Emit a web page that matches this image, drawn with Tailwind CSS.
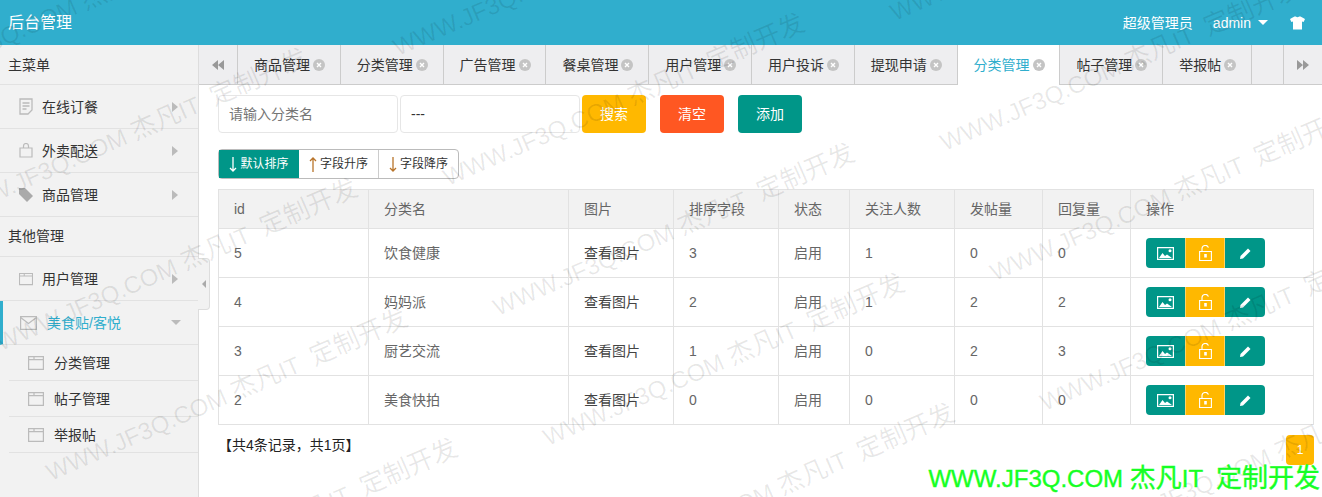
<!DOCTYPE html>
<html lang="zh">
<head>
<meta charset="utf-8">
<title>后台管理</title>
<script src="https://cdn.jsdelivr.net/npm/@tailwindcss/browser@4"></script>
</head>
<body class="font-['Liberation_Sans','Noto_Sans_CJK_SC',sans-serif] text-sm text-[#333] bg-white">
<div class="relative h-[497px] overflow-hidden flex flex-col">

    <!-- 顶栏 -->
    <header class="h-[45px] shrink-0 bg-[#30aecd] text-white flex items-center pl-2 pr-[17px]">
        <span class="text-base">后台管理</span>
        <span class="ml-auto">超级管理员</span>
        <span class="ml-5">admin</span>
        <span class="ml-[7px] border-x-[5px] border-t-[5px] border-x-transparent border-t-white"></span>
        <svg class="ml-[22px] w-[15px] h-[14px]" viewBox="0 0 15 14" fill="#fff"><path d="M4.5 0.5 L5.8 0.5 Q7.5 2 9.2 0.5 L10.5 0.5 L15 3 L13.6 6 L12 5.4 L12 13.5 L3 13.5 L3 5.4 L1.4 6 L0 3 Z"/></svg>
    </header>

    <div class="flex flex-1 min-h-0">
        <!-- 侧栏 -->
        <aside class="relative w-[199px] shrink-0 bg-[#f2f2f2] border-r border-[#ddd] text-[#333]">
            <div class="h-10 pl-2 flex items-center border-b border-[#e2e2e2]">主菜单</div>
            <div id="menu_main"></div>
            <div class="h-10 pl-2 pb-0.5 flex items-center border-b border-[#e2e2e2]">其他管理</div>
            <div id="menu_other"></div>
            <div class="absolute left-[198px] top-[213px] w-3 h-[52px] bg-[#f2f2f2] border border-l-0 border-[#ddd] rounded-r flex items-center justify-center">
                <span class="border-y-[4px] border-r-[4px] border-y-transparent border-r-[#aaa]"></span>
            </div>
        </aside>

        <main class="flex-1 min-w-0 flex flex-col">
            <!-- 标签栏 -->
            <nav id="tabs" class="h-10 shrink-0 flex bg-[#eeeef0] border-b border-[#ccc]"></nav>

            <div class="pl-[19px] pr-2 pt-2.5">
                <div class="flex items-start h-[38px]">
                    <input class="w-[180px] h-[38px] border border-[#e6e6e6] rounded-sm px-2.5 bg-white placeholder:text-[#757575] outline-none" placeholder="请输入分类名">
                    <div class="ml-0.5 w-[180px] h-[38px] border border-[#e6e6e6] rounded-sm px-2.5 flex items-center">---</div>
                    <button class="ml-0.5 w-16 h-[38px] rounded-sm bg-[#ffb800] text-white">搜索</button>
                    <button class="ml-3.5 w-16 h-[38px] rounded-sm bg-[#ff5722] text-white">清空</button>
                    <button class="ml-3.5 w-16 h-[38px] rounded-sm bg-[#009688] text-white">添加</button>
                </div>

                <div class="mt-4 w-[241px] h-[30px] flex border border-[#bbb] rounded-sm text-xs">
                    <div class="w-[80px] bg-[#009688] text-white flex items-center justify-center gap-[3px]"><svg class="w-2 h-[15px]" viewBox="0 0 8 15" fill="none" stroke="#fff" stroke-width="1.3"><path d="M4 0V14M1 11l3 3 3-3"/></svg>默认排序</div>
                    <div class="w-[80px] border-r border-[#ccc] flex items-center justify-center gap-[3px]"><svg class="w-2 h-[15px]" viewBox="0 0 8 15" fill="none" stroke="#b8742a" stroke-width="1.3"><path d="M4 1V15M1 4l3-3 3 3"/></svg>字段升序</div>
                    <div class="flex-1 flex items-center justify-center gap-[3px]"><svg class="w-2 h-[15px]" viewBox="0 0 8 15" fill="none" stroke="#b8742a" stroke-width="1.3"><path d="M4 0V14M1 11l3 3 3-3"/></svg>字段降序</div>
                </div>

                <table class="mt-2.5 w-[1095px] table-fixed text-[#666]">
                    <colgroup>
                        <col class="w-[150px]"><col class="w-[200px]"><col class="w-[105px]"><col class="w-[105px]"><col class="w-[71px]"><col class="w-[105px]"><col class="w-[88px]"><col class="w-[88px]"><col class="w-[183px]">
                    </colgroup>
                    <thead>
                        <tr class="h-[39px] bg-[#f2f2f2]">
                            <th class="font-normal text-left px-[15px] border border-[#e2e2e2]">id</th>
                            <th class="font-normal text-left px-[15px] border border-[#e2e2e2]">分类名</th>
                            <th class="font-normal text-left px-[15px] border border-[#e2e2e2]">图片</th>
                            <th class="font-normal text-left px-[15px] border border-[#e2e2e2]">排序字段</th>
                            <th class="font-normal text-left px-[15px] border border-[#e2e2e2]">状态</th>
                            <th class="font-normal text-left px-[15px] border border-[#e2e2e2]">关注人数</th>
                            <th class="font-normal text-left px-[15px] border border-[#e2e2e2]">发帖量</th>
                            <th class="font-normal text-left px-[15px] border border-[#e2e2e2]">回复量</th>
                            <th class="font-normal text-left px-[15px] border border-[#e2e2e2]">操作</th>
                        </tr>
                    </thead>
                    <tbody id="rows"></tbody>
                </table>

                <div class="relative mt-2.5 leading-[20px] text-[#222]">【共4条记录，共1页】
                    <span class="absolute left-[1068px] top-0 w-7 h-[30px] bg-[#ffb800] rounded-sm text-white text-xs flex items-center justify-center">1</span>
                </div>
            </div>
        </main>
    </div>

    <!-- 水印 -->
    <div id="watermark" class="absolute inset-0 overflow-hidden pointer-events-none"></div>
    <div class="absolute right-[2px] top-[464px] whitespace-pre text-2xl leading-[28px] text-[#16ff24] [-webkit-text-stroke:0.4px_#16ff24]">WWW.JF3Q.COM <span class="text-[26px]">杰凡</span>IT  <span class="text-[26px]">定制开发</span></div>
</div>

<script>
const icons = {
    doc: '<svg class="w-[14px] h-[17px]" viewBox="0 0 14 17" fill="none" stroke="#bbb" stroke-width="1.3"><path d="M1 1h12v11l-4 4H1zM3.5 5h7M3.5 8h7M3.5 11h4"/></svg>',
    bag: '<svg class="w-[14px] h-[15px]" viewBox="0 0 14 15" fill="none" stroke="#bbb" stroke-width="1.2"><path d="M1 5h12v9H1zM4.5 5V3a2.5 2.5 0 0 1 5 0v2"/></svg>',
    tag: '<svg class="w-[14px] h-[14px]" viewBox="0 0 14 14" fill="#aaa"><path d="M0 0h6l8 8-6 6-8-8z"/></svg>',
    folder: '<svg class="w-4 h-3.5" viewBox="0 0 16 14" fill="none" stroke="#bbb" stroke-width="1.2"><path d="M.6.6h14.8v12.8H.6zM.6 3.6h14.8M6 .6v3"/></svg>',
    mail: '<svg class="w-[17px] h-3.5" viewBox="0 0 17 14" fill="none" stroke="#bbb" stroke-width="1.2"><path d="M.6.6h15.8v12.8H.6zM.6 1.5l7.9 6 7.9-6"/></svg>'
};
const arrowRight = '<span class="block border-y-[5px] border-l-[6px] border-y-transparent border-l-[#bbb]"></span>';

function menuRow(item) {
    return `<div class="h-11 pl-[19px] pr-[20px] flex items-center gap-[9px] border-b border-[#e2e2e2]">
        <span class="w-[14px] flex justify-center">${icons[item.icon]}</span>
        <span>${item.name}</span>
        <span class="ml-auto">${arrowRight}</span>
    </div>`;
}

document.getElementById('menu_main').innerHTML = [
    { icon: 'doc', name: '在线订餐' },
    { icon: 'bag', name: '外卖配送' },
    { icon: 'tag', name: '商品管理' }
].map(menuRow).join('');

document.getElementById('menu_other').innerHTML = menuRow({ icon: 'folder', name: '用户管理' }) + `
    <div class="h-11 pl-[17px] pr-[17px] flex items-center gap-[10px] border-b border-l-[3px] border-[#e2e2e2] border-l-[#30aecd] text-[#30aecd]">
        <span>${icons.mail}</span>
        <span>美食贴/客悦</span>
        <span class="ml-auto border-x-[5px] border-t-[5px] border-x-transparent border-t-[#bbb]"></span>
    </div>
` + ['分类管理', '帖子管理', '举报帖'].map(name => `
    <div class="ml-[9px] h-9 pl-[19px] flex items-center gap-[10px] border-b border-[#e2e2e2]">
        ${icons.folder}<span>${name}</span>
    </div>
`).join('');

const closeIcon = `<svg class="w-3 h-3 ml-[3px] shrink-0" viewBox="0 0 12 12"><circle cx="6" cy="6" r="6" fill="#c4c4c4"/><path d="M4 4l4 4M8 4l-4 4" stroke="#fff" stroke-width="1.4"/></svg>`;
const tabs = ['商品管理', '分类管理', '广告管理', '餐桌管理', '用户管理', '用户投诉', '提现申请', '分类管理', '帖子管理', '举报帖'];
document.getElementById('tabs').innerHTML = `
    <div class="w-[39px] flex items-center justify-center border-r border-[#ccc]"><svg class="w-3 h-2.5" viewBox="0 0 12 10" fill="#999"><path d="M6 0v10L0 5zM12 0v10L6 5z"/></svg></div>
    ${tabs.map((name, i) => `
    <div class="${i === 9 ? 'w-[89px]' : 'w-[102.8px]'} pl-4 flex items-center border-r border-[#ccc] ${i === 7 ? 'bg-white text-[#30aecd] h-10' : ''}">${name}${closeIcon}</div>`).join('')}
    <div class="w-8 border-r border-[#ccc]"></div>
    <div class="flex-1 flex items-center justify-center"><svg class="w-3 h-2.5" viewBox="0 0 12 10" fill="#999"><path d="M0 0v10l6-5zM6 0v10l6-5z"/></svg></div>
`;

const data = [
    { id: 5, nama: '饮食健康', sort: 3, ikut: 1, post: 0, reply: 0 },
    { id: 4, nama: '妈妈派', sort: 2, ikut: 1, post: 2, reply: 2 },
    { id: 3, nama: '厨艺交流', sort: 1, ikut: 0, post: 2, reply: 3 },
    { id: 2, nama: '美食快拍', sort: 0, ikut: 0, post: 0, reply: 0 }
];
const td = 'px-[15px] border border-[#e2e2e2]';
document.getElementById('rows').innerHTML = data.map(item => `
    <tr class="h-[49px]">
        <td class="${td}">${item.id}</td>
        <td class="${td}">${item.nama}</td>
        <td class="${td} text-[#444]">查看图片</td>
        <td class="${td}">${item.sort}</td>
        <td class="${td}">启用</td>
        <td class="${td}">${item.ikut}</td>
        <td class="${td}">${item.post}</td>
        <td class="${td}">${item.reply}</td>
        <td class="${td}">
            <div class="flex w-[119px] h-[30px] rounded-sm overflow-hidden">
                <span class="w-[39px] bg-[#009688] flex items-center justify-center"><svg class="w-[17px] h-[13px]" viewBox="0 0 17 13"><path fill="#fff" fill-rule="evenodd" d="M0 0h17v13H0zM1.2 1.2v10.6h14.6V1.2z"/><circle cx="13" cy="3.8" r="1.5" fill="#fff"/><path fill="#fff" d="M2 11l3.5-5 2.5 3 2-1.5 5 3.5z"/></svg></span>
                <span class="w-10 bg-[#ffb800] border-x border-white/40 flex items-center justify-center"><svg class="w-[13px] h-4" viewBox="0 0 13 16" fill="none" stroke="#fff" stroke-width="1.1"><path d="M.6 6.5h11.8v9H.6zM3 6.5V3.6a3.3 3.3 0 0 1 6.4-1"/><path fill="#fff" stroke="none" d="M5.2 9h2.6v3.5H5.2z"/></svg></span>
                <span class="w-10 bg-[#009688] flex items-center justify-center"><svg class="w-[11px] h-[11px]" viewBox="0 0 11 11" fill="#fff"><path d="M8 0.5l2.5 2.5-7.5 7.5-3 .5.5-3z"/></svg></span>
            </div>
        </td>
    </tr>
`).join('');

// 水印位置：每条文字的起点
const watermark = document.getElementById('watermark');
for (let col = -1; col <= 3; col++) {
    for (let row = -3; row <= 2; row++) {
        const el = document.createElement('span');
        el.className = 'absolute origin-top-left -rotate-[23.6deg] whitespace-pre text-2xl leading-none text-black/[0.09]';
        el.innerHTML = 'WWW.JF3Q.COM <span class="text-[26px]">杰凡</span>IT  <span class="text-[26px]">定制开发</span>';
        el.style.left = (42 + 497 * col + 50 * row) + 'px';
        el.style.top = (461 - 35 * col + 130 * row) + 'px';
        watermark.appendChild(el);
    }
}
</script>
</body>
</html>
